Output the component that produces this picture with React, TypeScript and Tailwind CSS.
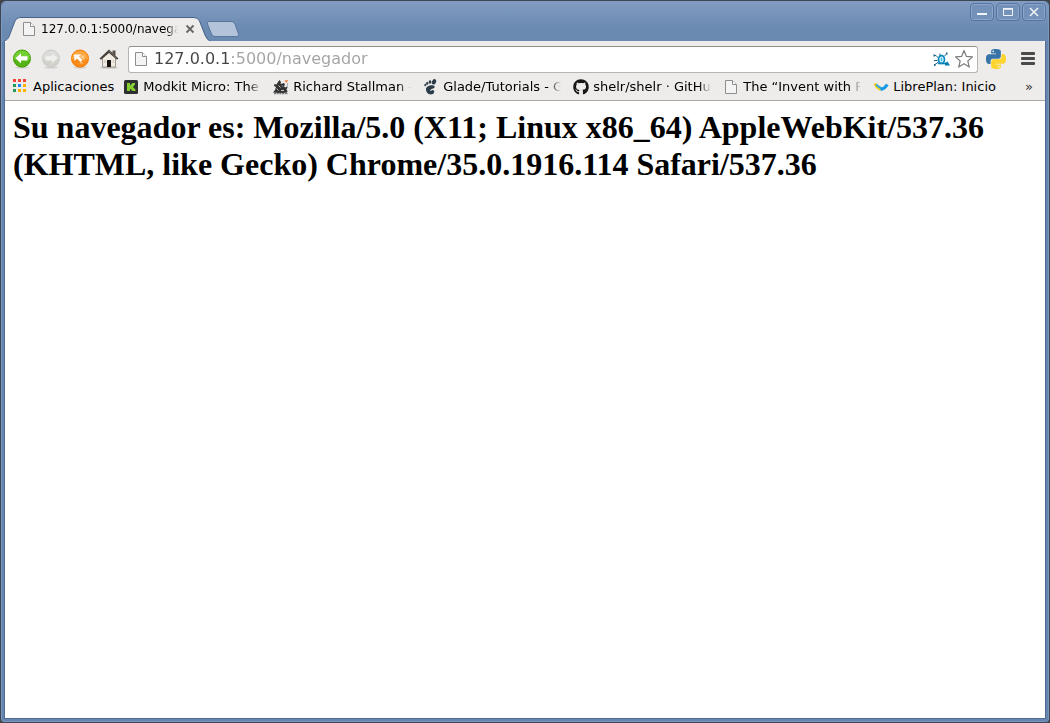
import React from "react";
import { FaGithub } from "react-icons/fa";

function PageIcon() {
  return (
    <svg viewBox="0 0 16 16" className="size-4 shrink-0" aria-hidden="true">
      <path d="M2.5 1.5h7l4 4v9h-11z" fill="#f4f4f4" stroke="#8e8e8e" />
      <path d="M9.5 1.5v4h4" fill="#fff" stroke="#8e8e8e" />
    </svg>
  );
}

function NavIcon({ kind }: { kind: "back" | "forward" | "reload" }) {
  const light = { back: "#74cf35", forward: "#dcdcd8", reload: "#ffa63f" }[kind];
  const dark = { back: "#43a000", forward: "#cbcbc7", reload: "#f57900" }[kind];
  const turn = { back: "", forward: "rotate(180 10 9.3)", reload: "" }[kind];
  return (
    <svg viewBox="0 0 20 20" className="size-5" aria-hidden="true">
      <ellipse cx="10" cy="18.6" rx="7" ry="1" fill="#000" opacity=".12" />
      <circle cx="10" cy="9.5" r="8.5" fill={light} stroke={dark} />
      <path d="M2 10.5a8 8 0 0 0 16 0q-8-3-16 0z" fill={dark} opacity=".6" />
      {kind === "reload" ? (
        <>
          <path d="M4 5.500h7L9 7.500l3.500 3.500-2 2L7 9.500l-2.500 2.500z" fill="#fff" />
          <path d="M10.500 4.500l2.500 2.500 1.500-1.500v6.500L10 7.500zM9 14.500l2.500-2 2 2z" fill="#fbcf9c" opacity=".8" />
        </>
      ) : (
        <path
          d="M3.500 9.300 9 4.200v3h6.500v4.200H9v3z"
          fill={kind === "forward" ? "#efefed" : "#fff"}
          transform={turn}
        />
      )}
    </svg>
  );
}

function HomeIcon() {
  return (
    <svg viewBox="0 0 20 20" className="size-5" aria-hidden="true">
      <ellipse cx="10" cy="18.700" rx="9" ry="1" fill="#000" opacity=".15" />
      <path d="M13.500 1.500h3v5h-3z" fill="#5c524b" />
      <path d="M3.500 9 10 3l6.500 6v9h-13z" fill="#f1ece3" stroke="#8f877e" strokeWidth=".8" />
      <path d="M8 11h4v7H8z" fill="#181310" />
      <path d="M13.500 11h2v3h-2zM4.800 11h2v3h-2z" fill="#d9d2c7" />
      <path d="M10 .5 19.500 9.500 18 10.800 10 4 2 10.800.5 9.500z" fill="#4a423c" />
      <path d="M10 1.800 17.500 9" stroke="#8d847c" strokeWidth=".8" />
    </svg>
  );
}

function AppsIcon() {
  const colors = [
    "#f44336", "#f44336", "#f44336",
    "#1f9d58", "#1e88ff", "#ffb300",
    "#1f9d58", "#ffb300", "#ffb300",
  ];
  return (
    <svg viewBox="0 0 16 16" className="size-4 shrink-0" shapeRendering="crispEdges" aria-hidden="true">
      {colors.map((c, i) => (
        <rect key={i} x={(i % 3) * 5} y={Math.floor(i / 3) * 5} width="3" height="3" fill={c} />
      ))}
    </svg>
  );
}

function ModkitIcon() {
  return (
    <svg viewBox="0 0 16 16" className="size-4 shrink-0" aria-hidden="true">
      <rect x="1" y="1" width="14" height="14" rx="1.500" fill="#2d2f31" />
      <path d="M4 4h3v2.500L9.500 4H12v1.500L10 8l2.500 2.500V12H9.500L7 9.500V12H4z" fill="#84cf2f" />
    </svg>
  );
}

function GnuIcon() {
  return (
    <svg viewBox="0 0 16 16" className="size-4 shrink-0" aria-hidden="true">
      <path d="M0 13.500 2 11l1-3-2-1 .5-2 2 .5L5 3l1.500-2 1.500 2-.5 2 2-.5L11 4l1 1.500-1 2 1.500 1 1-1 1 1-1 2 1 1.500-.5 1.500-3 .5H5z" fill="#333" />
      <path d="M1 14.500h14" stroke="#777" strokeWidth="1.500" strokeDasharray="2 .7" />
      <path d="M5.500 6.500l2 2M3.500 9.500l2 2M8 11.500h3M9 6.500l1 1" stroke="#c9c9c9" />
      <path d="M11.500 1.500 15 1l-1.500 3z" fill="#ef7b34" />
      <path d="M14.500 4v5" stroke="#999" strokeWidth=".7" />
    </svg>
  );
}

function GnomeIcon() {
  return (
    <svg viewBox="0 0 16 16" className="size-4 shrink-0" fill="#2a3b49" aria-hidden="true">
      <ellipse cx="11" cy="2.800" rx="2" ry="2.800" transform="rotate(25 11 2.800)" />
      <ellipse cx="7" cy="3" rx="1.300" ry="1.800" />
      <ellipse cx="4.200" cy="4.200" rx="1.100" ry="1.500" />
      <ellipse cx="2.300" cy="6" rx="1" ry="1.200" />
      <path d="M11.500 7.200C9.500 5 3.500 6.500 3 9.500c-.4 3 2 6 4.800 6 2.500 0 4-1.800 3.200-3.700-.5-1.200-2-1-2.600-.2-.5.800-1.400.3-1-.6.700-1.700 5.500-1.400 4.100-3.800z" />
    </svg>
  );
}

function LibrePlanIcon() {
  return (
    <svg viewBox="0 0 16 16" className="size-4 shrink-0" fill="none" strokeWidth="3" aria-hidden="true">
      <path d="M1.800 4.500q2 4.500 6 6" stroke="#f3cf19" />
      <path d="M3 5.500Q6 8.500 9 9.500" stroke="#35a8d0" strokeWidth="2" />
      <path d="M7.500 10.500Q12 9.500 14.300 5.500" stroke="#1299e8" />
    </svg>
  );
}

function BugIcon() {
  return (
    <svg viewBox="0 0 20 16" className="h-4 w-5 shrink-0" fill="none" aria-hidden="true">
      <path d="M3 4.500h2L7.500 7M3 9.500h3.500M4 13.500l3.500-2.500M9 5V2.500M13 5.500 15.500 3" stroke="#19678f" strokeWidth="1" />
      <ellipse cx="10.500" cy="8.500" rx="3" ry="3.900" fill="#c5effb" stroke="#0786b8" strokeWidth="1.600" />
      <path d="M7 12.500h8" stroke="#0786b8" strokeWidth="1.600" />
      <path d="M10.500 7v3" stroke="#35b5df" strokeWidth="1.200" />
      <path d="M14 12l2.500-1.500 2.500 4-5 0z" fill="#087cab" />
      <path d="M2.500 3.500H4v2H2.500zM15 1.500h1.500v2H15zM3 13h1.500v2H3z" fill="#19678f" />
    </svg>
  );
}

function StarIcon() {
  return (
    <svg viewBox="0 0 20 20" className="size-5" aria-hidden="true">
      <path
        d="M10 1.500l2.400 5.900 6.100.5-4.700 4.100 1.500 6.100L10 14.800l-5.300 3.300 1.500-6.100-4.700-4.100 6.100-.5z"
        fill="#fff"
        stroke="#7c7c7c"
        strokeWidth="1.200"
        strokeLinejoin="round"
      />
    </svg>
  );
}

const SNAKE =
  "M14.25.18l.9.2.73.26.59.3.45.32.34.34.25.34.16.33.1.3.04.26.02.2-.01.13V8.5l-.05.63-.13.55-.21.46-.26.38-.3.31-.33.25-.35.19-.35.14-.33.1-.3.07-.26.04-.21.02H8.77l-.69.05-.59.14-.5.22-.41.27-.33.32-.27.35-.2.36-.15.37-.1.35-.07.32-.04.27-.02.21v3.06H3.17l-.21-.03-.28-.07-.32-.12-.35-.18-.36-.26-.36-.36-.35-.46-.32-.59-.28-.73-.21-.88-.14-1.05-.05-1.23.06-1.22.16-1.04.24-.87.32-.71.36-.57.4-.44.42-.33.42-.24.4-.16.36-.1.32-.05.24-.01h.16l.06.01h8.16v-.83H6.18l-.01-2.75-.02-.37.05-.34.11-.31.17-.28.25-.26.31-.23.38-.2.44-.18.51-.15.58-.12.64-.1.71-.06.77-.04.84-.02 1.27.05zm-6.3 1.98l-.23.33-.08.41.08.41.23.34.33.22.41.09.41-.09.33-.22.23-.34.08-.41-.08-.41-.23-.33-.33-.22-.41-.09-.41.09z";

function PythonIcon() {
  return (
    <svg viewBox="0 0 24 24" className="size-5" aria-hidden="true">
      <path d={SNAKE} fill="#3874a8" />
      <path d={SNAKE} fill="#fdd52e" transform="rotate(180 12 12)" />
    </svg>
  );
}

const bookmarks = [
  { label: "Modkit Micro: The I", icon: <ModkitIcon /> },
  { label: "Richard Stallman - W", icon: <GnuIcon /> },
  { label: "Glade/Tutorials - GN", icon: <GnomeIcon /> },
  { label: "shelr/shelr · GitHub", icon: <FaGithub className="size-4 shrink-0 text-[#181616]" /> },
  { label: "The “Invent with Pyth", icon: <PageIcon /> },
];

const fade = "[mask-image:linear-gradient(to_right,#000_calc(100%-12px),transparent)]";

function WindowButton({ label, children }: { label: string; children: React.ReactNode }) {
  return (
    <button
      aria-label={label}
      className="flex h-[18px] w-6 items-center justify-center rounded-sm border border-[#56749f] bg-[#7391b9] shadow-[inset_0_0_0_1px_#8ca6c9]"
    >
      <svg viewBox="0 0 12 12" className="size-3" fill="none" stroke="#f1f4f8" strokeWidth="2">
        {children}
      </svg>
    </button>
  );
}

export default function App() {
  return (
    <div className="flex min-h-screen flex-col bg-[#444]">
      <div className="flex grow flex-col rounded-t-md rounded-b-sm border border-[#3c4654] bg-[#6685ae] px-[3px] pb-[3px] font-['DejaVu_Sans',sans-serif] shadow-[inset_0_0_0_1px_#7c98be]">
        <header className="-mx-[2px] flex h-10 justify-between rounded-t-md bg-linear-to-b from-[#839dc1] to-[#6a8ab2] to-70% pl-[2px]">
          <div className="flex items-end">
            <div className="relative flex h-6 w-[206px] items-center pr-3 pl-[17px]">
              <svg
                viewBox="0 0 206 24"
                preserveAspectRatio="none"
                className="absolute inset-0 size-full"
                aria-hidden="true"
              >
                <path
                  d="M0 24C4 23 5 20 6 17L11 4Q12.500.5 16 .5H190Q194 .5 195.500 4L201 18Q203 23 206 24"
                  fill="#edeceb"
                  stroke="#46618a"
                />
              </svg>
              <div className="relative flex min-w-0 grow items-center">
                <PageIcon />
                <span className={`ml-1 h-5 w-[138px] overflow-hidden text-xs leading-5 whitespace-nowrap text-black ${fade}`}>
                  127.0.0.1:5000/navegador
                </span>
                <button aria-label="Cerrar pestaña" className="ml-1 flex size-4 items-center justify-center">
                  <svg viewBox="0 0 10 10" className="size-[10px]" stroke="#666" strokeWidth="1.800">
                    <path d="M1.500 1.500l7 7M8.500 1.500l-7 7" />
                  </svg>
                </button>
              </div>
            </div>
            <button aria-label="Nueva pestaña" className="mb-1 -ml-1">
              <svg viewBox="0 0 34 16" className="h-4 w-[34px]">
                <path
                  d="M3 .5H25Q28 .5 29 3L32.500 13Q33 15.500 31 15.500H9Q6.500 15.500 5.500 13L1.500 3Q.5.500 3 .5z"
                  fill="#b3c3d9"
                  stroke="#59769f"
                />
              </svg>
            </button>
          </div>
          <div className="flex gap-[2px] pt-[2px] pr-[2px]">
            <WindowButton label="Minimizar">
              <path d="M1 8h10" />
            </WindowButton>
            <WindowButton label="Maximizar">
              <path d="M1.500 2.500h9v7h-9z" strokeWidth="1" />
              <path d="M1 3h10" strokeWidth="1.500" />
            </WindowButton>
            <WindowButton label="Cerrar">
              <path d="M2 2l8 8M10 2l-8 8" strokeWidth="1.500" />
            </WindowButton>
          </div>
        </header>

        <div className="flex grow flex-col border border-t-0 border-[#4f6c96] bg-white">
          <div className="rounded-t-sm border-b border-[#a9a8a6] bg-[#edeceb] text-black">
            <div className="flex h-8 items-center pt-1 pr-[7px] pl-[7px]">
              <div className="flex gap-[9px]">
                <button aria-label="Atrás"><NavIcon kind="back" /></button>
                <button aria-label="Adelante"><NavIcon kind="forward" /></button>
                <button aria-label="Recargar"><NavIcon kind="reload" /></button>
                <button aria-label="Inicio"><HomeIcon /></button>
              </div>
              <div className="ml-[9px] flex h-[27px] grow items-center rounded-[3px] border border-[#b5b4b2] border-t-[#92918f] bg-white pr-[3px] pl-1">
                <PageIcon />
                <input
                  aria-label="Dirección"
                  defaultValue="127.0.0.1:5000/navegador"
                  className="ml-[5px] min-w-0 grow bg-[linear-gradient(to_right,#444_76px,#a3a3a3_76px)] bg-clip-text font-['DejaVu_Sans',sans-serif] text-base leading-6 text-transparent caret-black outline-none"
                />
                <BugIcon />
                <button aria-label="Añadir a marcadores" className="ml-[3px]"><StarIcon /></button>
              </div>
              <button aria-label="Python" className="ml-2"><PythonIcon /></button>
              <button aria-label="Menú" className="ml-3 flex size-5 items-center justify-center">
                <svg viewBox="0 0 14 14" className="size-[14px]" fill="#4a4a4a">
                  <rect y="0" width="14" height="3" rx="1" />
                  <rect y="5" width="14" height="3" rx="1" />
                  <rect y="10" width="14" height="3" rx="1" />
                </svg>
              </button>
            </div>
            <nav className="flex h-[27px] items-center pr-3 pl-2 text-[13px] leading-5">
              <a href="#apps" className="mr-[9px] flex items-center gap-1">
                <AppsIcon />
                Aplicaciones
              </a>
              <div className="flex min-w-0 gap-3">
                {bookmarks.map((b) => (
                  <a key={b.label} href="#bookmark" className="flex w-[138px] items-center gap-1">
                    {b.icon}
                    <span className={`w-[118px] overflow-hidden whitespace-nowrap ${fade}`}>{b.label}</span>
                  </a>
                ))}
                <a href="#libreplan" className="flex items-center gap-1 whitespace-nowrap">
                  <LibrePlanIcon />
                  LibrePlan: Inicio
                </a>
              </div>
              <button aria-label="Más marcadores" className="ml-auto text-[#333]">»</button>
            </nav>
          </div>
          <main className="p-2">
            <h1 className="font-['Liberation_Serif',serif] text-[32px] leading-[37px] font-bold text-black">
              Su navegador es: Mozilla/5.0 (X11; Linux x86_64) AppleWebKit/537.36 (KHTML, like Gecko)
              Chrome/35.0.1916.114 Safari/537.36
            </h1>
          </main>
        </div>
      </div>
    </div>
  );
}
